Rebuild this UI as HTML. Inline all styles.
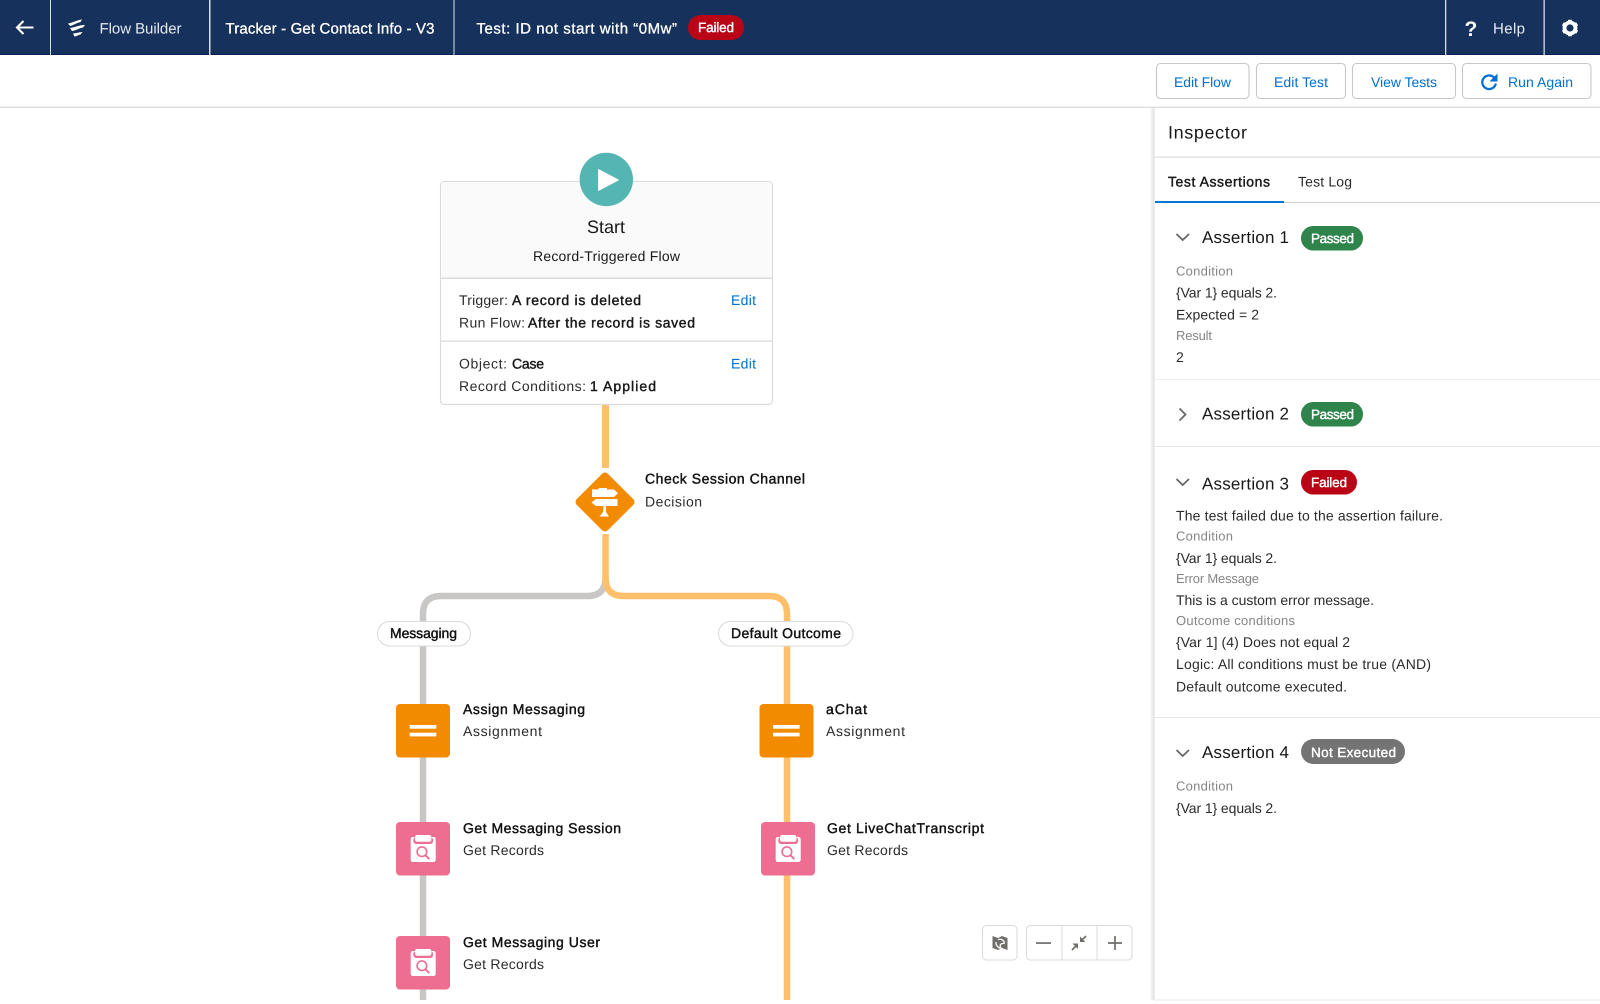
<!DOCTYPE html>
<html lang="en"><head><meta charset="utf-8"><title>Flow Builder</title>
<style>
html,body{margin:0;padding:0;background:#fff;width:1600px;height:1004px;overflow:hidden}
svg{display:block}
text{font-family:"Liberation Sans",Arial,sans-serif;font-size:14px;fill:#181818;text-rendering:geometricPrecision}
.b{font-weight:400;stroke:#181818;stroke-width:.42}
.l{font-size:13px;fill:#858585}
.a{fill:#0070d2}
.h{font-size:15px;fill:#fff}
.t{font-size:17px}
.bd{font-size:13.5px;font-weight:400;fill:#fff;stroke:#fff;stroke-width:.4}
.n{font-size:14px;font-weight:400;fill:#111;stroke:#111;stroke-width:.42}
.s{font-size:14px;fill:#2b2b2b}
</style></head><body>
<svg width="1600" height="1004" viewBox="0 0 1600 1004" xmlns="http://www.w3.org/2000/svg">
<defs><linearGradient id="sh" x1="0" x2="1" y1="0" y2="0"><stop offset="0" stop-color="#fff"/><stop offset="1" stop-color="#dcdcdc"/></linearGradient>
<g id="clip"><rect x="396" y="822" width="54" height="53.500" rx="4" fill="#ee6e92"/>
<rect x="410.700" y="837" width="25" height="25" rx="2.200" fill="#fff"/>
<rect x="413.300" y="837" width="19.800" height="7" rx="3" fill="#ee6e92"/>
<rect x="415" y="835" width="16.400" height="6.800" rx="2.200" fill="#fff"/>
<circle cx="421.900" cy="851.700" r="4.800" fill="none" stroke="#ee6e92" stroke-width="1.600"/>
<path d="M425.300 855.200L429.300 859" stroke="#ee6e92" stroke-width="1.900"/></g></defs>
<rect width="1600" height="1004" fill="#fff"/>

<!-- header -->
<rect width="1600" height="55" fill="#16325c"/>
<rect y="54" width="1600" height="1" fill="#0b1f55"/>
<g fill="#d8dde6"><rect x="50" width="1" height="55"/><rect x="209" width="1.500" height="55"/><rect x="453.500" width="1" height="55"/><rect x="1445" width="1.300" height="55"/><rect x="1543.500" width="1.300" height="55"/></g>
<path d="M33.500 27.500H17M23.500 21L17 27.500L23.500 34" fill="none" stroke="#fff" stroke-width="2.100"/>
<g fill="#fff">
<path d="M68 23.500C72 23 77 20 82 19.500L80.500 22C76 23 73 25.500 70 26Z"/>
<path d="M70 28C74 27.500 79 25 85 25L83 27.500C79 28 75 31 72 31Z"/>
<path d="M73 33.500C76 33.500 79 32 82.500 32L80.500 34.500C78 35 76 36.500 74.500 36.500Z"/>
</g>
<text class="h" x="99.500" y="33.500" textLength="82" style="fill:#e6e9ef">Flow Builder</text>
<text class="h" x="225.500" y="33.500" textLength="209" style="stroke:#fff;stroke-width:.3">Tracker - Get Contact Info - V3</text>
<text class="h" x="476.500" y="33.500" textLength="200.500" style="stroke:#fff;stroke-width:.3">Test: ID not start with “0Mw”</text>
<rect x="688" y="15" width="56" height="25" rx="12.500" fill="#ba0517"/>
<text class="bd" x="698" y="32" textLength="36">Failed</text>
<text x="1464.500" y="36" style="font-size:21px;font-weight:700;fill:#fff">?</text>
<text class="h" x="1493" y="33.500" textLength="32" style="fill:#e6e9ef">Help</text>
<g transform="translate(1570 28)" fill="#fff"><circle r="5.500" fill="none" stroke="#fff" stroke-width="3.800"/>
<rect x="-1.900" y="-8.300" width="3.800" height="3" rx=".6"/><rect x="-1.900" y="5.300" width="3.800" height="3" rx=".6"/>
<rect x="-1.900" y="-8.300" width="3.800" height="3" rx=".6" transform="rotate(60)"/><rect x="-1.900" y="5.300" width="3.800" height="3" rx=".6" transform="rotate(60)"/>
<rect x="-1.900" y="-8.300" width="3.800" height="3" rx=".6" transform="rotate(120)"/><rect x="-1.900" y="5.300" width="3.800" height="3" rx=".6" transform="rotate(120)"/></g>

<!-- toolbar -->
<rect y="106.500" width="1600" height="1.500" fill="#dfdfdf"/>
<g fill="#fff" stroke="#c9c7c5" stroke-width="1.100"><rect x="1156.500" y="63.500" width="92.500" height="35" rx="4"/><rect x="1256.500" y="63.500" width="89" height="35" rx="4"/><rect x="1352.500" y="63.500" width="103" height="35" rx="4"/><rect x="1462.500" y="63.500" width="128.500" height="35" rx="4"/></g>
<text class="a" x="1174" y="87" textLength="57">Edit Flow</text>
<text class="a" x="1274" y="87" textLength="54">Edit Test</text>
<text class="a" x="1371" y="87" textLength="66">View Tests</text>
<text class="a" x="1508" y="87" textLength="65">Run Again</text>
<path d="M1494 77.500A6.800 6.800 0 1 0 1495.800 83.500" fill="none" stroke="#0070d2" stroke-width="2.300"/>
<path d="M1497.500 73.500V81.500H1489.500Z" fill="#0070d2"/>

<!-- inspector -->
<rect x="1150" y="108" width="4.500" height="892" fill="url(#sh)"/>
<rect x="1154" y="999.500" width="446" height="1" fill="#e8e8e8"/>
<text x="1168" y="138.500" textLength="79" style="font-size:18px">Inspector</text>
<rect x="1154" y="156.500" width="446" height="1.300" fill="#e0e0e0"/>
<text class="b" x="1168" y="186.500" textLength="102">Test Assertions</text>
<text class="s" x="1298" y="186.500" textLength="54">Test Log</text>
<rect x="1155" y="202" width="445" height="1" fill="#d0d0d0"/>
<rect x="1155" y="201" width="129" height="2" fill="#0176d3"/>

<g fill="none" stroke="#666" stroke-width="1.800">
<path d="M1176.500 234L1182.700 240L1189 234"/>
<path d="M1179.500 408.500L1185.500 414.500L1179.500 420.500"/>
<path d="M1176.500 479L1182.700 485L1189 479"/>
<path d="M1176.500 750L1182.700 756L1189 750"/>
</g>
<text class="t" x="1202" y="243" textLength="87">Assertion 1</text>
<rect x="1301" y="226" width="62" height="24.500" rx="12.200" fill="#2e844a"/>
<text class="bd" x="1311" y="243" textLength="43">Passed</text>
<text class="l" x="1176" y="275.500" textLength="57">Condition</text>
<text class="s" x="1176" y="297.500" textLength="101">{Var 1} equals 2.</text>
<text class="s" x="1176" y="319.500" textLength="83">Expected = 2</text>
<text class="l" x="1176" y="340" textLength="36">Result</text>
<text class="s" x="1176" y="362" textLength="7">2</text>
<rect x="1154" y="379" width="446" height="1" fill="#ececec"/>

<text class="t" x="1202" y="419.500" textLength="87">Assertion 2</text>
<rect x="1301" y="402" width="62" height="24.500" rx="12.200" fill="#2e844a"/>
<text class="bd" x="1311" y="419" textLength="43">Passed</text>
<rect x="1154" y="446" width="446" height="1" fill="#e6e6e6"/>

<text class="t" x="1202" y="489.500" textLength="87">Assertion 3</text>
<rect x="1301" y="470" width="56" height="24.500" rx="12.200" fill="#ba0517"/>
<text class="bd" x="1311" y="487" textLength="36">Failed</text>
<text class="s" x="1176" y="520.500" textLength="267">The test failed due to the assertion failure.</text>
<text class="l" x="1176" y="540.500" textLength="57">Condition</text>
<text class="s" x="1176" y="563" textLength="101">{Var 1} equals 2.</text>
<text class="l" x="1176" y="583" textLength="83">Error Message</text>
<text class="s" x="1176" y="605" textLength="198">This is a custom error message.</text>
<text class="l" x="1176" y="625" textLength="119">Outcome conditions</text>
<text class="s" x="1176" y="647" textLength="174">{Var 1] (4) Does not equal 2</text>
<text class="s" x="1176" y="669" textLength="255">Logic: All conditions must be true (AND)</text>
<text class="s" x="1176" y="691.500" textLength="171">Default outcome executed.</text>
<rect x="1154" y="717" width="446" height="1" fill="#e6e6e6"/>

<text class="t" x="1202" y="758" textLength="87">Assertion 4</text>
<rect x="1301" y="739" width="104" height="25" rx="12.500" fill="#747474"/>
<text class="bd" x="1311" y="757" textLength="85">Not Executed</text>
<text class="l" x="1176" y="790.500" textLength="57">Condition</text>
<text class="s" x="1176" y="813" textLength="101">{Var 1} equals 2.</text>

<!-- connectors -->
<g fill="none" stroke-width="6.500">
<path d="M605.500 400V468" stroke="#ffbf6b" stroke-width="7"/>
<path d="M605.500 575V578Q605.500 596 587 596H441Q423 596 423 614V1000" stroke="#c9c7c5"/>
<path d="M605.500 534V578Q605.500 596 624 596H769Q787 596 787 614V1000" stroke="#ffbf6b"/>
</g>

<!-- start card -->
<rect x="440.500" y="181.500" width="332" height="223" rx="4" fill="#fff" stroke="#dddbda" stroke-width="1.200"/>
<path d="M441 278V185.500Q441 182 444.500 182H768.500Q772 182 772 185.500V278Z" fill="#fafafa"/>
<rect x="441" y="277.500" width="331" height="1.500" fill="#dddbda"/>
<rect x="441" y="340.500" width="331" height="1.300" fill="#dddbda"/>
<circle cx="606.300" cy="179.500" r="26.700" fill="#54b5b3"/>
<path d="M598.500 169.500V190.500L618.500 180Z" fill="#fff" stroke="#fff" stroke-width=".8" stroke-linejoin="round"/>
<text x="587" y="233" textLength="38" style="font-size:18px">Start</text>
<text class="s" x="533" y="261" textLength="147" style="fill:#181818">Record-Triggered Flow</text>
<text class="s" x="459" y="305" textLength="49">Trigger:</text><text class="b" x="512" y="305" textLength="129">A record is deleted</text>
<text class="s" x="459" y="327.500" textLength="66">Run Flow:</text><text class="b" x="528" y="327.500" textLength="167">After the record is saved</text>
<text class="s" x="459" y="368.500" textLength="48">Object:</text><text class="b" x="512" y="368.500" textLength="32">Case</text>
<text class="s" x="459" y="391" textLength="127">Record Conditions:</text><text class="b" x="590" y="391" textLength="66">1 Applied</text>
<text class="a" x="731" y="305" textLength="25">Edit</text>
<text class="a" x="731" y="368.500" textLength="25">Edit</text>

<!-- decision -->
<rect x="583" y="480" width="44" height="44" rx="4" fill="#f38b00" transform="rotate(45 605 502)"/>
<g fill="#fff">
<path d="M592 489.500H598.500V488H607V489.500H614L618 493.200L614 497H592Z"/>
<path d="M596 499H617.500V506H596L591.500 502.500Z"/>
<path d="M603.500 506H606V512L609 516.500H599.500L603 512Z"/>
</g>
<text class="n" x="645" y="483.500" textLength="160">Check Session Channel</text>
<text class="s" x="645" y="506.500" textLength="57">Decision</text>

<!-- pills -->
<rect x="377.500" y="621.500" width="93" height="24.500" rx="12.200" fill="#fff" stroke="#dddbda" stroke-width="1.100"/>
<text class="n" x="390" y="638" textLength="67">Messaging</text>
<rect x="718.500" y="621.500" width="134.500" height="24.500" rx="12.200" fill="#fff" stroke="#dddbda" stroke-width="1.100"/>
<text class="n" x="731" y="638" textLength="110">Default Outcome</text>

<!-- assignment nodes -->
<rect x="396" y="704" width="54" height="53.500" rx="4" fill="#f38b00"/>
<rect x="409.700" y="725" width="26.600" height="3.700" fill="#fff"/><rect x="409.700" y="732.700" width="26.600" height="3.700" fill="#fff"/>
<text class="n" x="463" y="714" textLength="122">Assign Messaging</text>
<text class="s" x="463" y="736" textLength="79">Assignment</text>
<rect x="759.500" y="704" width="54" height="53.500" rx="4" fill="#f38b00"/>
<rect x="773" y="725" width="26.600" height="3.700" fill="#fff"/><rect x="773" y="732.700" width="26.600" height="3.700" fill="#fff"/>
<text class="n" x="826" y="714" textLength="41">aChat</text>
<text class="s" x="826" y="736" textLength="79">Assignment</text>

<!-- get records nodes -->
<use href="#clip"/>
<text class="n" x="463" y="833" textLength="158">Get Messaging Session</text>
<text class="s" x="463" y="855" textLength="81">Get Records</text>
<use href="#clip" transform="translate(0 114)"/>
<text class="n" x="463" y="947" textLength="137">Get Messaging User</text>
<text class="s" x="463" y="969" textLength="81">Get Records</text>
<use href="#clip" transform="translate(365 0)"/>
<text class="n" x="827" y="833" textLength="157">Get LiveChatTranscript</text>
<text class="s" x="827" y="855" textLength="81">Get Records</text>

<!-- canvas controls -->
<rect x="982.500" y="925.500" width="34.500" height="34.500" rx="4" fill="#fff" stroke="#dddbda" stroke-width="1.100"/>
<rect x="1026.500" y="925.500" width="105.500" height="34.500" rx="4" fill="#fff" stroke="#dddbda" stroke-width="1.100"/>
<rect x="1061.500" y="926" width="1" height="34" fill="#dddbda"/><rect x="1096.500" y="926" width="1" height="34" fill="#dddbda"/>
<path d="M992.500 936L998 938L1002 936L1007.500 938V950L1002 948L998 950L992.500 948Z" fill="#706e6b"/>
<path d="M998 939.500C1002 938.500 1005 941 1004 943.500C1001 943 999 945 1001 948C998.500 948.500 995.500 945 996 942" fill="none" stroke="#fff" stroke-width="1.300"/>
<rect x="1036" y="942.200" width="15" height="1.700" fill="#706e6b"/>
<path d="M1072 950L1077 945M1086 936L1081 941" stroke="#706e6b" stroke-width="1.700"/>
<path d="M1072.500 943.500H1078V949ZM1085.500 942H1080V936.500Z" fill="#706e6b"/>
<path d="M1108 943H1122M1115 936V950" stroke="#706e6b" stroke-width="1.700"/>
</svg>
</body></html>
